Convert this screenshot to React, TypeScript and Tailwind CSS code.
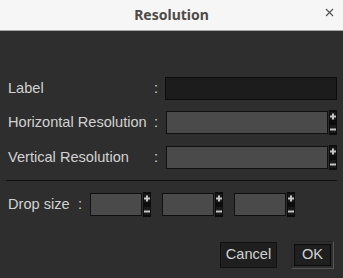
import React from "react";

const font = { fontFamily: '"Liberation Sans", Arial, sans-serif' };

function Spinner({ h = 25 }: { h?: number }) {
  return (
    <svg width="8" height={h} viewBox={`0 0 8 ${h}`} className="block shrink-0">
      <rect x="0" y="0" width="8" height={h} fill="#0c0c0c" />
      <rect x="1" y="2" width="6" height="8" fill="#1a1a1a" />
      <rect x="1" y={h - 10} width="6" height="8" fill="#1a1a1a" />
      <rect x="1" y="5.5" width="6" height="2" fill="#c4c4c4" />
      <rect x="3" y="3.5" width="2" height="6" fill="#c4c4c4" />
      <rect x="1" y={h - 6.5} width="6" height="2" fill="#c4c4c4" />
    </svg>
  );
}

function SpinInput({ w }: { w: number }) {
  return (
    <div className="flex items-center">
      <div
        className="h-[23px] border border-[#101010] bg-[#4a4a4a]"
        style={{ width: w }}
      />
      <div className="ml-px">
        <Spinner />
      </div>
    </div>
  );
}

export default function App() {
  return (
    <div className="w-[343px] h-[278px] overflow-hidden flex flex-col" style={font}>
      <div className="h-[31px] shrink-0 bg-[#f6f6f6] border-b border-[#a8a8a8] relative flex items-center justify-center">
        <span
          className="text-[14px] font-bold text-[#4f4a47] leading-none"
          style={{ fontFamily: '"Noto Sans", "Open Sans", sans-serif' }}
        >
          Resolution
        </span>
        <svg
          width="9"
          height="9"
          viewBox="0 0 9 9"
          className="absolute left-[325px] top-[8px]"
        >
          <path d="M1 1 L8 8 M8 1 L1 8" stroke="#555" strokeWidth="1.2" fill="none" />
        </svg>
      </div>
      <div className="flex-1 bg-[#2e2e2e] text-[#d2d2d2] text-[14.6px] flex flex-col">
        <div className="mt-[45px] h-[25px] flex items-center pl-[8px]">
          <span className="w-[146px]">Label</span>
          <span className="w-[11px]">:</span>
          <div className="h-[23px] w-[172px] border border-[#0c0c0c] bg-[#1c1c1c]" />
        </div>
        <div className="mt-[9px] h-[25px] flex items-center pl-[8px]">
          <span className="w-[146px]">Horizontal Resolution</span>
          <span className="w-[12px]">:</span>
          <SpinInput w={162} />
        </div>
        <div className="mt-[10px] h-[25px] flex items-center pl-[8px]">
          <span className="w-[146px]">Vertical Resolution</span>
          <span className="w-[12px]">:</span>
          <SpinInput w={162} />
        </div>
        <div className="mt-[10px] ml-[6px] w-[331px] h-px bg-[#101010]" />
        <div className="mt-[11px] h-[25px] flex items-center pl-[8px]">
          <span className="w-[70px]">Drop size</span>
          <span className="w-[12px]">:</span>
          <div className="flex items-center gap-[11px]">
            <SpinInput w={52} />
            <SpinInput w={52} />
            <SpinInput w={52} />
          </div>
        </div>
        <div className="mt-[25px] flex items-start pl-[220px]">
          <div className="h-[26px] w-[57px] border border-[#111] bg-[#1f1f1f] flex items-center justify-center">
            Cancel
          </div>
          <div className="ml-[14px] h-[28px] w-[43px] border border-t-[#262626] border-l-[#262626] border-r-[#555] border-b-[#555] p-[2px] -mt-px">
            <div className="h-full w-full border border-[#0a0a0a] bg-[#1f1f1f] flex items-center justify-center">
              OK
            </div>
          </div>
        </div>
      </div>
    </div>
  );
}
